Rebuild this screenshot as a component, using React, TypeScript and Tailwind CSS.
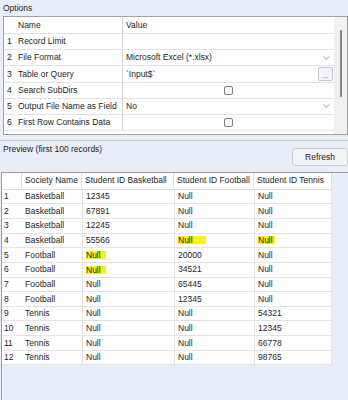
import React from "react";

const options = [
  { n: 1, name: "Record Limit", kind: "text", value: "" },
  { n: 2, name: "File Format", kind: "select", value: "Microsoft Excel (*.xlsx)" },
  { n: 3, name: "Table or Query", kind: "browse", value: "`Input$`" },
  { n: 4, name: "Search SubDirs", kind: "check", value: "" },
  { n: 5, name: "Output File Name as Field", kind: "select", value: "No" },
  { n: 6, name: "First Row Contains Data", kind: "check", value: "" },
];

const rows = [
  ["Basketball", "12345", "Null", "Null"],
  ["Basketball", "67891", "Null", "Null"],
  ["Basketball", "12245", "Null", "Null"],
  ["Basketball", "55566", "Null", "Null"],
  ["Football", "Null", "20000", "Null"],
  ["Football", "Null", "34521", "Null"],
  ["Football", "Null", "65445", "Null"],
  ["Football", "Null", "12345", "Null"],
  ["Tennis", "Null", "Null", "54321"],
  ["Tennis", "Null", "Null", "12345"],
  ["Tennis", "Null", "Null", "66778"],
  ["Tennis", "Null", "Null", "98765"],
];

// row-col keys that carry the yellow marker
const marked: Record<string, string> = {
  "3-2": "pr-[13px]",
  "3-3": "pr-[2px]",
  "4-1": "pr-[5px]",
  "5-1": "pr-[5px]",
};

function Chevron() {
  return (
    <svg width="7" height="4" viewBox="0 0 7 4" className="mr-[4px]">
      <polyline points="0.5,0.5 3.5,3.3 6.5,0.5" fill="none" stroke="#8a8a8a" strokeWidth="0.9" />
    </svg>
  );
}

function Checkbox() {
  return <div className="w-[9px] h-[9px] rounded-[2px] border border-[#7c7c7c] bg-[#f7f7f7]" />;
}

function OptionValue({ kind, value }: { kind: string; value: string }) {
  if (kind === "select") {
    return (
      <div className="flex items-center justify-between w-full pl-[3px]">
        <span>{value}</span>
        <Chevron />
      </div>
    );
  }
  if (kind === "browse") {
    return (
      <div className="flex items-center justify-between w-full pl-[3px]">
        <span>{value}</span>
        <div className="w-[15px] h-[14px] mr-[1px] rounded-[2px] border border-[#c3c6d9] bg-[#f2f3fa] flex items-end justify-center text-[#7b62a8] text-[7px] leading-[9px]">
          ...
        </div>
      </div>
    );
  }
  if (kind === "check") {
    return (
      <div className="flex items-center justify-center w-full">
        <Checkbox />
      </div>
    );
  }
  return <span className="pl-[3px]">{value}</span>;
}

export default function App() {
  return (
    <div className="w-[348px] h-[400px] overflow-hidden bg-[#e9edf7] text-[8.5px] text-[#1e1e1e] font-['Liberation_Sans',Arial,sans-serif]">
      <div className="h-[16px] pl-[3px] pt-[3px] leading-[10px]">Options</div>

      {/* Options grid */}
      <div className="ml-[3px] h-[119px] flex border border-[#a3a3a3]">
        <div className="w-[330px] bg-white">
          <div className="flex h-[17px] items-center border-b border-[#e2e2e2]">
            <div className="w-[14px]" />
            <div className="w-[104px]">Name</div>
            <div className="flex-1 h-full flex items-center pl-[3px] border-l border-[#d6d6d6]">Value</div>
          </div>
          {options.map((o) => (
            <div key={o.n} className="flex h-[16.2px] items-center border-b border-[#e2e2e2]">
              <div className="w-[14px] pl-[3px]">{o.n}</div>
              <div className="w-[104px] whitespace-nowrap">{o.name}</div>
              <div className="flex-1 h-full flex items-center border-l border-[#d6d6d6]">
                <OptionValue kind={o.kind} value={o.value} />
              </div>
            </div>
          ))}
        </div>
        <div className="flex-1 bg-[#f0f0f0] pl-[6px] pt-[13px]">
          <div className="w-[2px] h-[67px] rounded bg-[#858585]" />
        </div>
      </div>

      {/* Preview header */}
      <div className="h-[37px] pt-[5px]">
        <div className="h-full border-t border-[#cfd3de] flex items-start">
          <div className="pl-[3px] pt-[3px] leading-[10px]">Preview (first 100 records)</div>
          <div className="ml-auto mt-[7px] w-[56px] h-[18px] rounded-[3px] border border-[#c9ccd4] bg-[#f3f4f8] flex items-center justify-center">
            Refresh
          </div>
        </div>
      </div>

      {/* Preview table */}
      <div className="ml-[1px] h-[228px] border-l border-t border-[#9d9d9d]">
        <div className="w-[330px] grid grid-cols-[20px_60px_92px_80px_78px] bg-white">
          <div className="h-[16.7px] border-b border-r border-[#dedede]" />
          {["Society Name", "Student ID Basketball", "Student ID Football", "Student ID Tennis"].map((h) => (
            <div key={h} className="h-[16.7px] flex items-center pl-[3px] whitespace-nowrap border-b border-r border-[#dedede]">
              {h}
            </div>
          ))}
          {rows.map((r, i) => (
            <React.Fragment key={i}>
              <div className="h-[14.65px] flex items-center pl-[2px] border-b border-[#e3e3e3]">{i + 1}</div>
              {r.map((c, j) => (
                <div
                  key={j}
                  className={
                    "h-[14.65px] flex items-center border-b border-[#e3e3e3] " +
                    (j === 0 ? "pl-[3px]" : "pl-[3px] border-l border-[#e3e3e3]") +
                    (j === 3 ? " border-r" : "")
                  }
                >
                  {marked[`${i}-${j}`] ? (
                    <span className={"bg-[#f7f21a] leading-[8px] " + marked[`${i}-${j}`]}>{c}</span>
                  ) : (
                    c
                  )}
                </div>
              ))}
            </React.Fragment>
          ))}
        </div>
      </div>
    </div>
  );
}
